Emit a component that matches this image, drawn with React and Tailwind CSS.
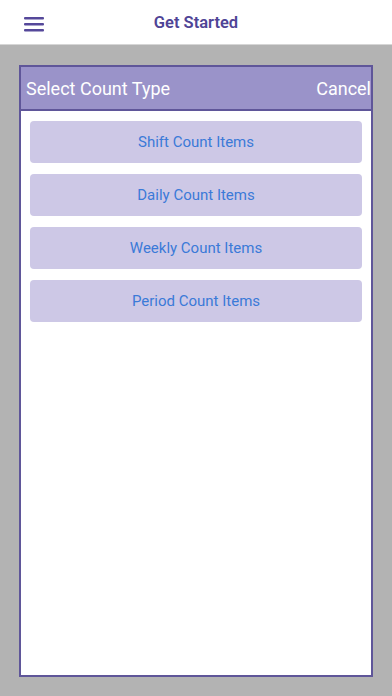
import React from 'react';

const App = () => {
  const items = ['Shift Count Items', 'Daily Count Items', 'Weekly Count Items', 'Period Count Items'];

  return (
    <div
      className="w-[392px] h-[696px] flex flex-col bg-[#b3b3b3]"
      style={{ fontFamily: 'Roboto, "Liberation Sans", sans-serif' }}
    >
      {/* Header */}
      <div className="h-[45px] bg-white flex items-center relative border-b border-[#d6d6d6]">
        <button className="absolute left-[24px] top-[16px]">
          <svg width="21" height="16" viewBox="0 0 21 16">
            <rect x="0" y="1" width="20" height="2.5" rx="1" fill="#55489a" />
            <rect x="0" y="7" width="20" height="2.5" rx="1" fill="#55489a" />
            <rect x="0" y="13" width="20" height="2.5" rx="1" fill="#55489a" />
          </svg>
        </button>
        <h1 className="w-full text-center text-[16.5px] font-semibold text-[#4f4496] pt-[3px]">Get Started</h1>
      </div>

      {/* Modal */}
      <div className="flex-1 px-[19px] pt-[20px] pb-[19px] flex">
        <div className="flex-1 flex flex-col border-2 border-[#5f5699] bg-white">
          <div className="h-[44px] bg-[#9a93c9] border-b-2 border-[#5f5699] flex items-center justify-between pl-[5px] pr-0">
            <span className="text-white text-[18px]">Select Count Type</span>
            <span className="text-white text-[18px]">Cancel</span>
          </div>
          <div className="flex flex-col gap-[11px] px-[9px] pt-[10px]">
            {items.map((item) => (
              <button
                key={item}
                className="h-[42px] rounded-[4px] bg-[#cdc8e6] text-[#3b7ad8] text-[15px] pt-[1px]"
              >
                {item}
              </button>
            ))}
          </div>
        </div>
      </div>
    </div>
  );
};

export default App;
